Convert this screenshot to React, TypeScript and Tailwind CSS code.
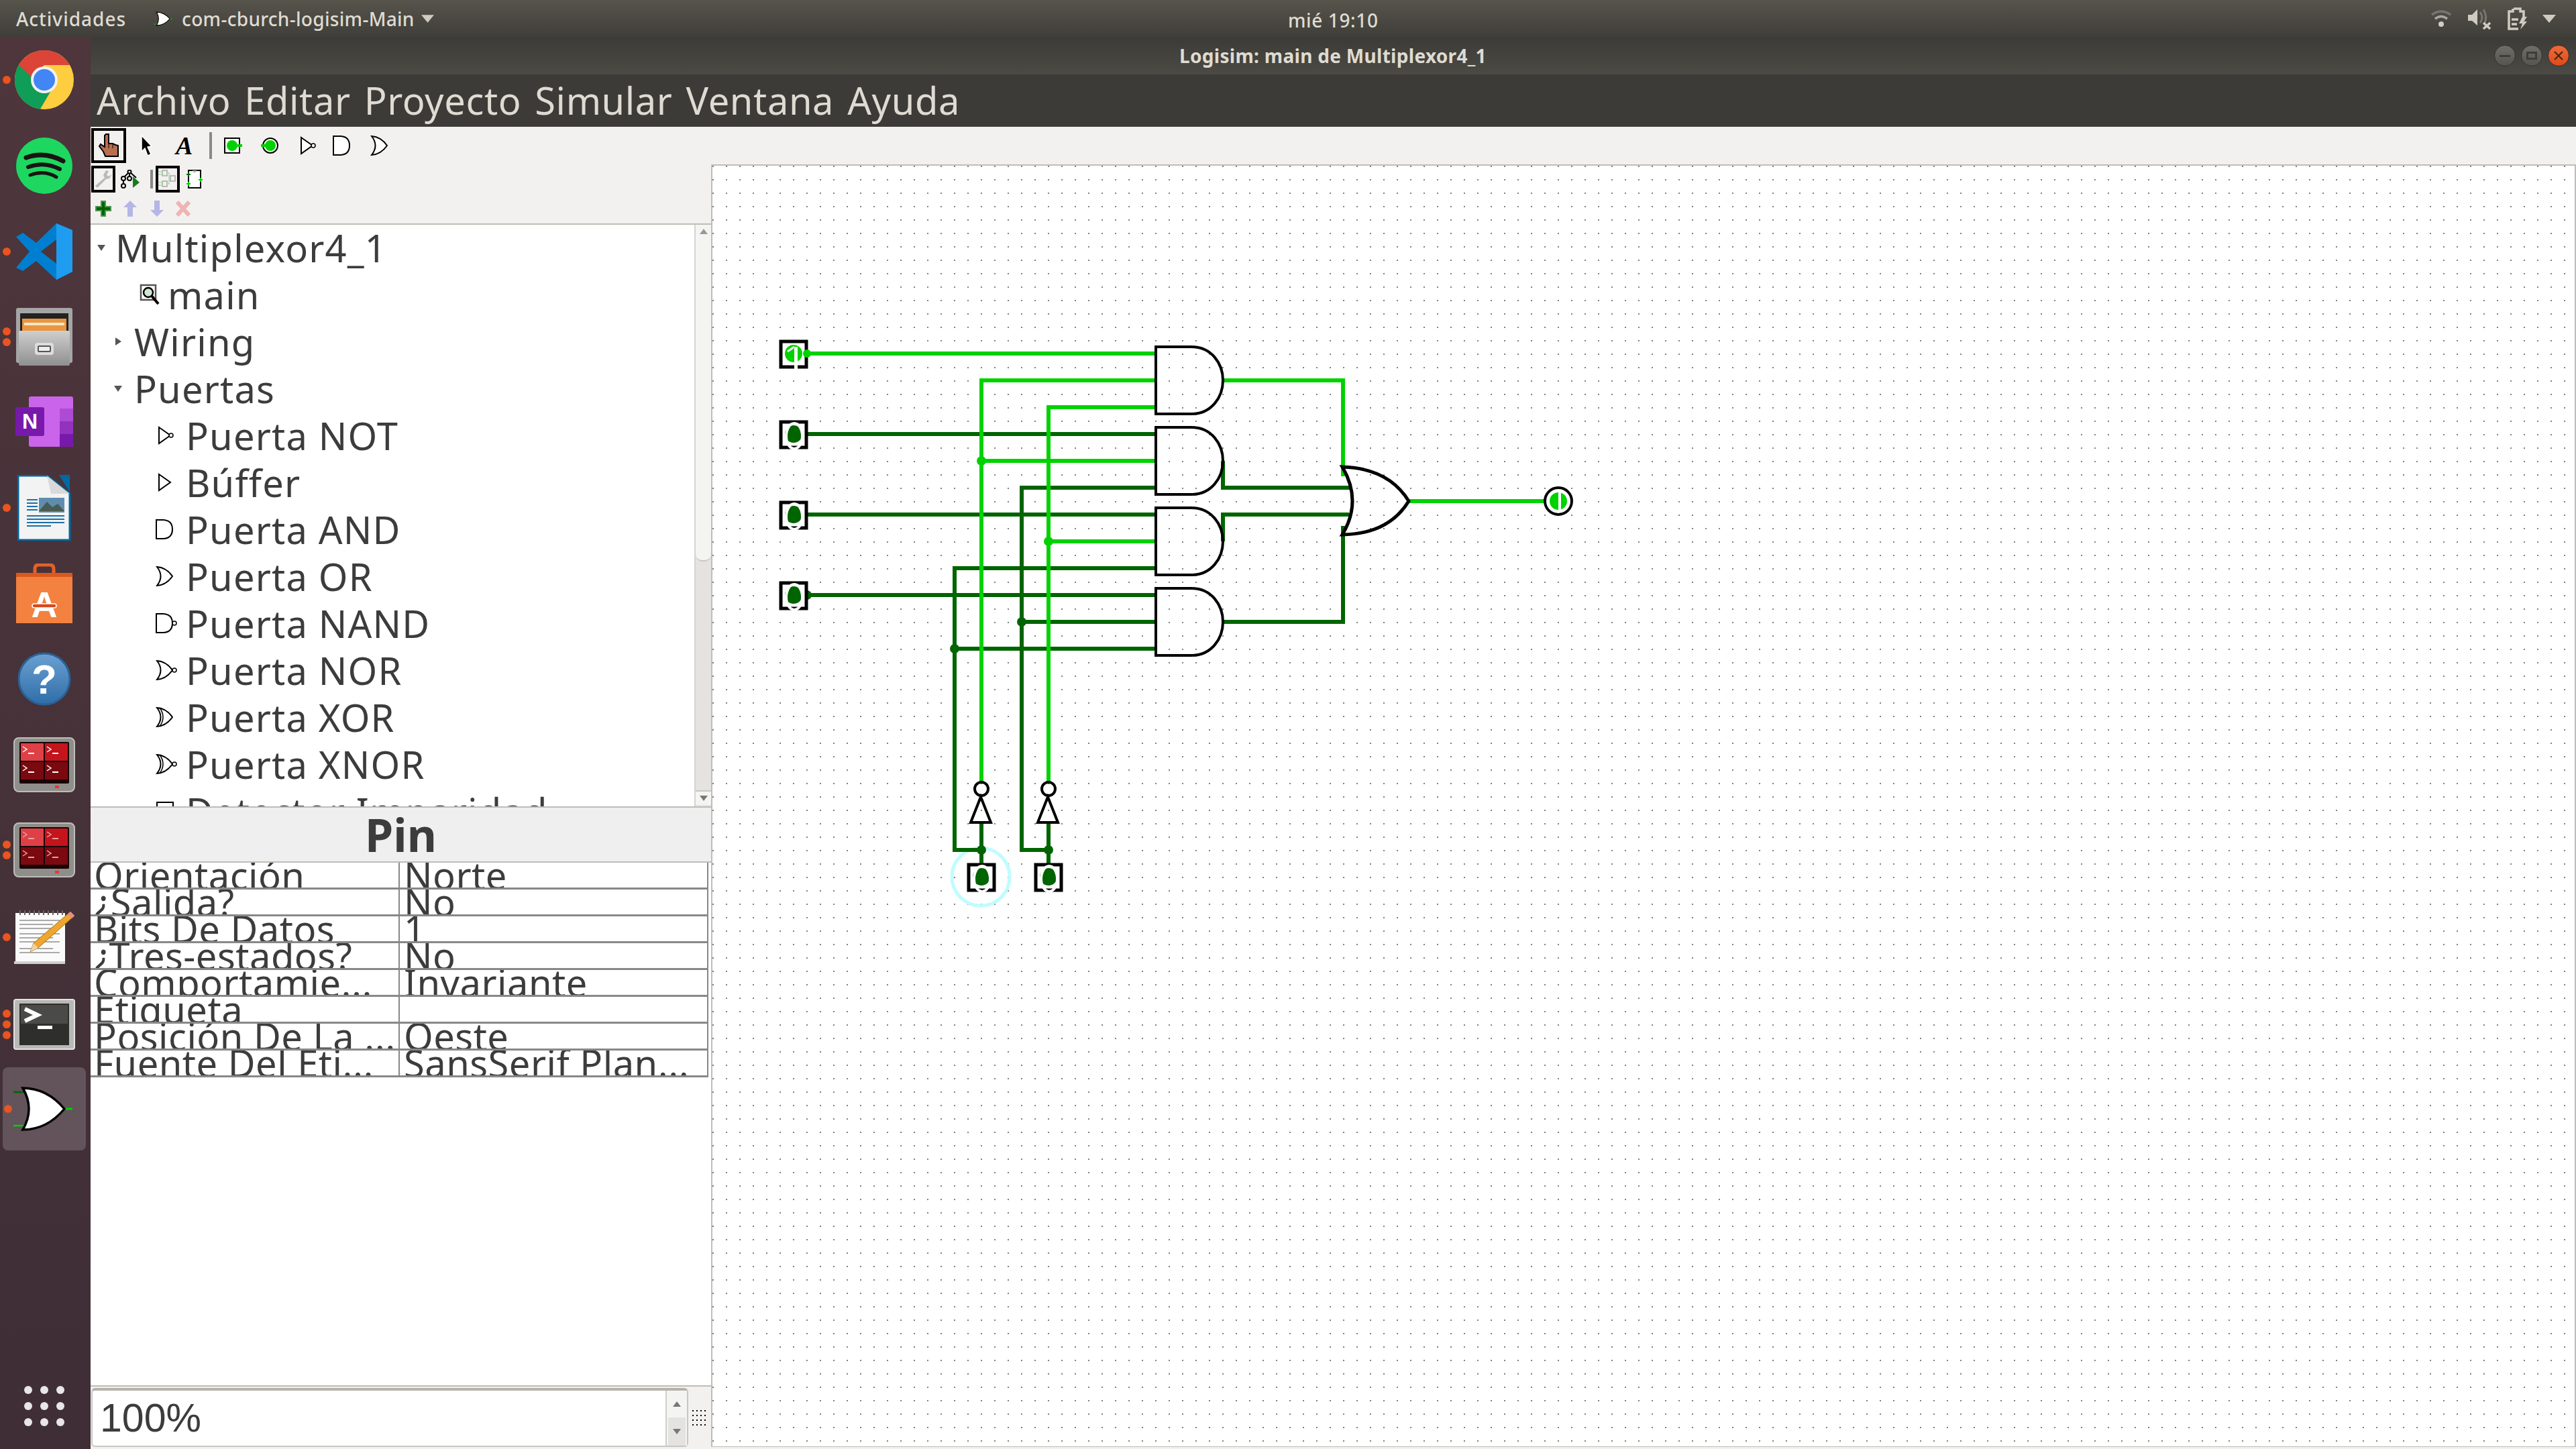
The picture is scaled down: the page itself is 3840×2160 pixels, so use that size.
import React from "react";

const UI_FONT = "font-['Noto_Sans','DejaVu_Sans',sans-serif]";
const BRIGHT = "#00d200";
const DARK = "#006400";

type GateKind = "not" | "buffer" | "and" | "or" | "nand" | "nor" | "xor" | "xnor" | "parity";

// Tree and toolbar gates share one 32x30 box
const GateIcon = ({ kind, className }: { kind: GateKind; className: string }) => {
	const bubble = kind === "not" || kind === "nand" || kind === "nor" || kind === "xnor";
	const bx = kind === "not" ? 23 : 28;
	return (
		<svg viewBox="0 0 32 30" className={className} fill="white" stroke="black" strokeWidth="2">
			{(kind === "not" || kind === "buffer") && <path d="M5 3 L22 15 L5 27 Z" />}
			{(kind === "and" || kind === "nand") && <path d="M1 1 H12 Q25 2 25 15 Q25 28 12 29 H1 Z" />}
			{(kind === "or" || kind === "nor" || kind === "xor" || kind === "xnor") && (
				<path d="M2 1 Q16 2 25 15 Q16 28 2 29 Q13 15 2 1 Z" />
			)}
			{(kind === "xor" || kind === "xnor") && <path d="M6 1 Q16 15 6 29" fill="none" strokeWidth="1.5" />}
			{kind === "parity" && <rect x="2" y="2" width="24" height="26" />}
			{bubble && <circle cx={bx} cy="15" r="3" strokeWidth="1.5" />}
		</svg>
	);
};

const TreeArrow = ({ open, className }: { open?: boolean; className: string }) => (
	<svg viewBox="0 0 14 14" className={className} fill="#555">
		{open ? <path d="M1 3 H13 L7 12 Z" /> : <path d="M3 1 L12 7 L3 13 Z" />}
	</svg>
);

/* ---------- dock ---------- */

const Chrome = () => (
	<svg viewBox="0 0 88 88" className="w-[88px] h-[88px]">
		<circle cx="44" cy="44" r="44" fill="#ffcd40" />
		<path d="M5.9 22 A44 44 0 0 0 38 87.6 L60 50 L44 44 Z" fill="#0f9d58" />
		<path d="M5.9 22 A44 44 0 0 1 82.1 22 H44 L25 40 Z" fill="#db4437" />
		<circle cx="44" cy="44" r="20" fill="#f1f1f1" />
		<circle cx="44" cy="44" r="16" fill="#4285f4" />
	</svg>
);

const Spotify = () => (
	<svg viewBox="0 0 84 84" className="w-[84px] h-[84px]">
		<circle cx="42" cy="42" r="42" fill="#1ed760" />
		<g fill="none" stroke="#191414" strokeLinecap="round">
			<path d="M15 30 Q42 20 70 35" strokeWidth="7" />
			<path d="M18 44 Q42 35 65 47" strokeWidth="6" />
			<path d="M21 56 Q42 48 60 59" strokeWidth="5" />
		</g>
	</svg>
);

const VsCode = () => (
	<svg viewBox="0 0 84 84" className="w-[84px] h-[84px]">
		<path d="M60 0 L84 10 V72 L60 84 L30 56 L10 71 L0 66 L20 42 L0 20 L10 14 L30 29 Z" fill="#007fd0" />
		<path d="M60 24 L37 42 L60 60 Z" fill="#4b343b" />
		<path d="M60 0 L84 10 V72 L60 84 Z" fill="#1f9cf0" />
	</svg>
);

const Files = () => (
	<svg viewBox="0 0 84 86" className="w-[84px] h-[86px]">
		<defs>
			<linearGradient id="cab" x1="0" y1="0" x2="0" y2="1">
				<stop offset="0" stopColor="#cfcfcf" />
				<stop offset="1" stopColor="#8f8f8f" />
			</linearGradient>
		</defs>
		<rect x="0" y="0" width="84" height="82" rx="3" fill="#a5a5a5" />
		<rect x="6" y="8" width="72" height="30" fill="#222" />
		<rect x="9" y="16" width="66" height="18" fill="#e9963f" />
		<rect x="12" y="22" width="60" height="4" fill="#f6e4c8" />
		<rect x="4" y="34" width="76" height="52" rx="2" fill="url(#cab)" />
		<rect x="28" y="52" width="28" height="18" rx="4" fill="#ddd" />
		<rect x="32" y="56" width="20" height="10" rx="2" fill="#555" />
		<rect x="34" y="58" width="16" height="6" fill="#eee" />
	</svg>
);

const OneNote = () => (
	<svg viewBox="0 0 86 76" className="w-[86px] h-[76px]">
		<rect x="20" y="0" width="66" height="75" rx="3" fill="#ca64ea" />
		<rect x="66" y="18" width="20" height="19" fill="#ae4bd5" />
		<rect x="66" y="37" width="20" height="19" fill="#9332bf" />
		<path d="M66 56 H86 V72 Q86 75 83 75 H66 Z" fill="#7719aa" />
		<rect x="0" y="16" width="43" height="43" rx="3" fill="#7719aa" />
		<text x="21.5" y="48" textAnchor="middle" fontFamily="Liberation Sans" fontWeight="700" fontSize="32" fill="white">
			N
		</text>
	</svg>
);

const Writer = () => (
	<svg viewBox="0 0 80 98" className="w-[80px] h-[98px]">
		<path d="M62 0 H78 V26 Z" fill="#0369a3" />
		<path d="M1 1 H44 L78 28 V97 H1 Z" fill="#f3f3f3" stroke="#0369a3" strokeWidth="3" />
		<path d="M44 1 L78 28 H50 Z" fill="#d9d9d9" />
		<rect x="32" y="34" width="38" height="22" fill="#5f8db0" />
		<path d="M32 54 L44 40 L52 48 L60 43 L70 54 Z" fill="#4a5b52" />
		{[36, 41, 46, 51].map((y) => (
			<rect key={y} x="14" y={y} width="16" height="2" fill="#1c6fa8" />
		))}
		{[60, 65, 70, 75].map((y) => (
			<rect key={y} x="14" y={y} width={y === 75 ? 36 : 56} height="2" fill="#1c6fa8" />
		))}
	</svg>
);

const Software = () => (
	<svg viewBox="0 0 84 90" className="w-[84px] h-[90px]">
		<path d="M28 20 V8 Q28 2 34 2 H50 Q56 2 56 8 V20" fill="none" stroke="#e3612a" strokeWidth="5" />
		<path d="M0 14 H84 V89 H0 Z" fill="#f3813f" />
		<rect x="0" y="14" width="84" height="6" fill="#d9591f" />
		<text x="42" y="80" textAnchor="middle" fontFamily="Liberation Sans" fontWeight="700" fontSize="54" fill="white">
			A
		</text>
		<rect x="24" y="60" width="36" height="6" rx="3" fill="#d9491a" stroke="white" strokeWidth="1.5" />
	</svg>
);

const Help = () => (
	<svg viewBox="0 0 80 80" className="w-[80px] h-[80px]">
		<defs>
			<linearGradient id="hlp" x1="0" y1="0" x2="0" y2="1">
				<stop offset="0" stopColor="#6ba0d2" />
				<stop offset="1" stopColor="#2f6ea8" />
			</linearGradient>
		</defs>
		<circle cx="40" cy="40" r="38" fill="url(#hlp)" stroke="#2a6296" strokeWidth="3" />
		<text x="40" y="62" textAnchor="middle" fontFamily="Liberation Sans" fontWeight="700" fontSize="62" fill="white">
			?
		</text>
	</svg>
);

const RedTerminal = ({ dim }: { dim?: boolean }) => (
	<svg viewBox="0 0 92 82" className="w-[92px] h-[82px]">
		<rect x="1" y="1" width="90" height="80" rx="7" fill="#8e8e8a" stroke="#bdbdb9" strokeWidth="2" />
		<rect x="9" y="7" width="74" height="62" rx="2" fill="#1a0305" />
		{[11, 47].map((x) =>
			[9, 37].map((y) => (
				<g key={`${x}-${y}`}>
					<rect x={x} y={y} width="34" height="26" fill={y === 9 ? (x === 11 ? "#de4046" : "#c4141c") : "#7a0a10"} />
					<path d={`M${x + 3} ${y + 5} L${x + 9} ${y + 9} L${x + 3} ${y + 13}`} fill="none" stroke={dim ? "#e9a0a0" : "white"} strokeWidth="1.5" />
					<rect x={x + 11} y={y + 14} width="9" height="2" fill={dim ? "#e9a0a0" : "white"} />
				</g>
			)),
		)}
		<rect x="62" y="72" width="6" height="4" fill="#e33" />
	</svg>
);

const Notes = () => (
	<svg viewBox="0 0 90 80" className="w-[90px] h-[80px]">
		<rect x="2" y="4" width="74" height="72" fill="#fafafa" />
		<path d="M0 76 H76 V80 H0 Z" fill="#cfcfcf" />
		{Array.from({ length: 10 }, (_, i) => (
			<rect key={i} x={8 + i * 7} y="0" width="2" height="7" fill="#666" />
		))}
		{[14, 20, 26, 34, 40, 46, 56, 62].map((y) => (
			<rect key={y} x="8" y={y} width={y % 4 === 0 ? 50 : 60} height="2" fill="#aaa" />
		))}
		<path d="M84 2 L90 8 L36 56 L24 62 L29 49 Z" fill="#eea62d" stroke="#a9701a" strokeWidth="1" />
		<path d="M84 2 L90 8 L86 12 L80 6 Z" fill="#e38d8d" />
		<path d="M24 62 L29 49 L36 56 Z" fill="#eed2a8" />
	</svg>
);

const Terminal = () => (
	<svg viewBox="0 0 92 76" className="w-[92px] h-[76px]">
		<rect x="1" y="1" width="90" height="74" rx="3" fill="#b8b8b6" stroke="#e3e3e1" strokeWidth="2" />
		<rect x="9" y="7" width="74" height="62" fill="#2e2e2c" />
		<rect x="11" y="9" width="70" height="28" fill="#4a4a48" />
		<path d="M17 18 L36 27 L17 36" transform="translate(0 -3)" fill="none" stroke="white" strokeWidth="6" />
		<rect x="36" y="40" width="22" height="5" fill="white" />
	</svg>
);

const LogisimIcon = ({ className }: { className: string }) => (
	<svg viewBox="0 0 88 66" className={className}>
		<path d="M0 8 H20" stroke={DARK} strokeWidth="2.5" />
		<path d="M0 58 H20" stroke={BRIGHT} strokeWidth="2.5" />
		<path d="M76 33 H88" stroke={BRIGHT} strokeWidth="3" />
		<path d="M14 2 Q50 2 76 33 Q50 64 14 64 Q32 33 14 2 Z" fill="white" stroke="black" strokeWidth="3.5" />
	</svg>
);

const Dots = ({ count }: { count: number }) => (
	<div className="w-[20px] flex flex-col items-center gap-[4px]">
		{Array.from({ length: count }, (_, i) => (
			<div key={i} className="w-[12px] h-[12px] rounded-full bg-[#e95420]" />
		))}
	</div>
);

// nudge: the launcher spacing in the screenshot is not quite even
const DOCK_ITEMS: { icon: React.ReactNode; dots: number; nudge: string }[] = [
	{ icon: <Chrome />, dots: 1, nudge: "h-[128px]" },
	{ icon: <Spotify />, dots: 0, nudge: "h-[128px]" },
	{ icon: <VsCode />, dots: 1, nudge: "h-[128px]" },
	{ icon: <Files />, dots: 2, nudge: "h-[126px]" },
	{ icon: <OneNote />, dots: 0, nudge: "h-[128px]" },
	{ icon: <Writer />, dots: 1, nudge: "h-[128px]" },
	{ icon: <Software />, dots: 0, nudge: "h-[127px]" },
	{ icon: <Help />, dots: 0, nudge: "h-[128px]" },
	{ icon: <RedTerminal />, dots: 0, nudge: "h-[127px]" },
	{ icon: <RedTerminal dim />, dots: 2, nudge: "h-[128px]" },
	{ icon: <Notes />, dots: 1, nudge: "h-[131px]" },
	{ icon: <Terminal />, dots: 3, nudge: "h-[129px]" },
];

const Dock = () => (
	<div className="w-[135px] shrink-0 flex flex-col bg-gradient-to-b from-[#4e363c] to-[#3f2e36]">
		{DOCK_ITEMS.map((item, idx) => (
			<div key={idx} className={`${item.nudge} flex items-center relative`}>
				<div className="w-[20px] flex">{item.dots > 0 && <Dots count={item.dots} />}</div>
				<div className="w-[92px] flex justify-center">{item.icon}</div>
			</div>
		))}
		<div className="h-[124px] w-[124px] ml-[4px] rounded-[8px] bg-[#63535a] flex items-center">
			<div className="w-[16px] flex">
				<Dots count={1} />
			</div>
			<LogisimIcon className="w-[88px] h-[66px]" />
		</div>
		<div className="mt-auto mb-[34px] ml-[36px] grid grid-cols-3 gap-[12px] w-[60px]">
			{Array.from({ length: 9 }, (_, i) => (
				<div key={i} className="w-[12px] h-[12px] rounded-full bg-[#e8e6e6]" />
			))}
		</div>
	</div>
);

/* ---------- top panel ---------- */

const TopBar = () => (
	<div className={`h-[55px] shrink-0 flex items-center bg-gradient-to-b from-[#57544c] to-[#3f3e39] text-[#dfdbd2] text-[28px] font-medium relative ${UI_FONT}`}>
		<span className="ml-[24px] tracking-[1px]">Actividades</span>
		<LogisimIcon className="ml-[41px] w-[28px] h-[24px]" />
		<span className="ml-[14px] tracking-[0.3px]">com-cburch-logisim-Main</span>
		<svg viewBox="0 0 20 12" className="ml-[10px] w-[19px] h-[12px]" fill="#cfcbc2">
			<path d="M0 0 H20 L10 12 Z" />
		</svg>
		<span className="absolute left-[1920px] top-[9px] tracking-[0.6px]">mié 19:10</span>
		<div className="ml-auto flex items-center mr-[30px]">
			<svg viewBox="0 0 30 28" className="w-[30px] h-[28px]" fill="none" stroke="#aaa8a2" strokeWidth="3.5">
				<path d="M1 8 Q15 -2 29 8" stroke="#777570" />
				<path d="M6 14 Q15 7 24 14" />
				<circle cx="15" cy="22" r="4" fill="#d0cdc6" stroke="none" />
			</svg>
			<svg viewBox="0 0 34 32" className="ml-[25px] w-[34px] h-[32px]">
				<path d="M0 10 H6 L14 2 V26 L6 19 H0 Z" fill="#cfcbc2" />
				<path d="M18 6 Q24 14 18 22 M23 2 Q30 14 24 24" fill="none" stroke="#777570" strokeWidth="3" />
				<path d="M23 22 L33 31 M33 22 L23 31" stroke="#cfcbc2" strokeWidth="3.5" />
			</svg>
			<svg viewBox="0 0 30 34" className="ml-[25px] w-[30px] h-[34px]">
				<path d="M9 2 H19 V6 H24 V20 M16 32 H2 V6 H8 V2" fill="none" stroke="#cfcbc2" strokeWidth="3.5" />
				<path d="M6 18 H16 M6 25 H14" stroke="#cfcbc2" strokeWidth="3.5" />
				<path d="M22 14 H29 L24 21 H29 L19 33 L22 24 H17 Z" fill="#cfcbc2" />
			</svg>
			<svg viewBox="0 0 20 12" className="ml-[22px] w-[20px] h-[12px]" fill="#cfcbc2">
				<path d="M0 0 H20 L10 12 Z" />
			</svg>
		</div>
	</div>
);

const WindowButton = ({ children, close }: { children: React.ReactNode; close?: boolean }) => (
	<div
		className={`w-[32px] h-[32px] rounded-full border border-[#33322e] flex items-center justify-center bg-gradient-to-b ${
			close ? "from-[#f0693a] to-[#df4a16]" : "from-[#6f6e69] to-[#55544f]"
		}`}
	>
		{children}
	</div>
);

const TitleBar = () => (
	<div className={`h-[56px] shrink-0 flex items-center bg-gradient-to-b from-[#3c3b37] to-[#4b4a44] relative ${UI_FONT}`}>
		<span className="absolute left-[1623px] top-[7px] text-[28px] font-bold text-[#dfdbd2] tracking-[0.3px]">
			Logisim: main de Multiplexor4_1
		</span>
		<div className="ml-auto mr-[10px] flex gap-[8px]">
			<WindowButton>
				<div className="w-[16px] h-[3px] bg-[#3e3d39]" />
			</WindowButton>
			<WindowButton>
				<div className="w-[16px] h-[12px] border-[3px] border-[#3e3d39]" />
			</WindowButton>
			<WindowButton close>
				<svg viewBox="0 0 14 14" className="w-[14px] h-[14px]" stroke="#3a2a10" strokeWidth="2">
					<path d="M1 1 L13 13 M13 1 L1 13" />
				</svg>
			</WindowButton>
		</div>
	</div>
);

const MENU = ["Archivo", "Editar", "Proyecto", "Simular", "Ventana", "Ayuda"];

const MenuBar = () => (
	<div className={`h-[78px] shrink-0 bg-[#3c3b37] flex items-center pl-[9px] pb-[3px] gap-[20px] text-[56px] text-[#dfdbd2] tracking-[0.6px] leading-none ${UI_FONT}`}>
		{MENU.map((m) => (
			<span key={m}>{m}</span>
		))}
	</div>
);

/* ---------- toolbar ---------- */

const Selected = ({ className, children }: { className: string; children: React.ReactNode }) => (
	<div className={`border-[4px] border-black flex items-center justify-center ${className}`}>{children}</div>
);

const Separator = ({ className }: { className: string }) => <div className={`w-[4px] bg-[#888] ${className}`} />;

const Hand = () => (
	<svg viewBox="0 0 32 36" className="w-[32px] h-[36px]">
		<path d="M12 1 H16 V15 L22 15 L26 17 L30 18 V34 H11 L8 27 L2 19 L4 16 L10 20 V3 Z" fill="#b86f50" stroke="black" strokeWidth="2" />
		<path d="M16 15 V22 M22 16 V22" stroke="#4a2a1a" strokeWidth="1.5" />
	</svg>
);

const ToolPin = ({ output }: { output?: boolean }) => (
	<svg viewBox="0 0 28 24" className="w-[28px] h-[24px]">
		{output ? <circle cx="15" cy="12" r="11" fill="white" stroke="black" strokeWidth="2" /> : <rect x="1" y="1" width="22" height="22" fill="white" stroke="black" strokeWidth="2" />}
		<circle cx={output ? 15 : 12} cy="12" r="8" fill={BRIGHT} />
		<rect x={output ? 1 : 20} y="10" width="7" height="4" fill={BRIGHT} />
	</svg>
);

const Toolbar = () => (
	<div className="h-[144px] shrink-0 bg-[#f2f1ef] flex flex-col pl-[1px] pt-[2px]">
		<div className="h-[52px] flex items-center">
			<Selected className="w-[52px] h-[52px]">
				<Hand />
			</Selected>
			<svg viewBox="0 0 20 32" className="ml-[20px] w-[20px] h-[32px]">
				<path d="M3 1 L18 17 L12 18 L17 29 L12 31 L8 20 L3 25 Z" fill="black" stroke="white" strokeWidth="1.5" />
			</svg>
			<span className="ml-[34px] w-[28px] text-[38px] leading-none font-bold italic font-['Liberation_Serif',serif] text-black">A</span>
			<Separator className="ml-[22px] h-[40px]" />
			<div className="ml-[18px] flex">
				<ToolPin />
			</div>
			<div className="ml-[26px] flex">
				<ToolPin output />
			</div>
			<GateIcon kind="not" className="ml-[28px] w-[32px] h-[30px]" />
			<GateIcon kind="and" className="ml-[20px] w-[32px] h-[30px]" />
			<GateIcon kind="or" className="ml-[24px] w-[32px] h-[30px]" />
		</div>
		<div className="h-[40px] mt-[4px] flex items-center">
			<Selected className="w-[36px] h-[40px]">
				<svg viewBox="0 0 28 28" className="w-[28px] h-[28px]">
					<path d="M18 1 L14 8 L16 12 L2 24 L5 27 L18 14 L23 13 L27 7 L22 10 L19 8 L22 2 Z" fill="#b9b9b5" />
				</svg>
			</Selected>
			<svg viewBox="0 0 28 28" className="ml-[8px] w-[28px] h-[28px]" fill="white" stroke="black" strokeWidth="2">
				<path d="M13 3 L4 12 M13 3 L13 12 M13 3 L23 12 M4 12 V24" fill="none" />
				<circle cx="13" cy="3" r="2.5" />
				<circle cx="4" cy="13" r="3" />
				<circle cx="13" cy="13" r="3" />
				<circle cx="4" cy="24" r="3" />
				<path d="M18 10 L28 19 L18 27 Z" fill="#1b7a1b" stroke="none" />
			</svg>
			<Separator className="ml-[16px] h-[28px]" />
			<Selected className="ml-[4px] w-[36px] h-[40px]">
				<svg viewBox="0 0 28 30" className="w-[28px] h-[30px]" fill="none" stroke="#a8a8a4" strokeWidth="1.5">
					<rect x="6" y="2" width="7" height="8" />
					<rect x="6" y="18" width="7" height="8" />
					<rect x="18" y="10" width="7" height="8" />
					<path d="M0 4 H6 M0 8 H6 M0 20 H6 M0 24 H6 M13 6 H16 V14 H18 M13 22 H16 V14" stroke="#a9dca9" />
				</svg>
			</Selected>
			<svg viewBox="0 0 24 28" className="ml-[10px] w-[24px] h-[28px]">
				<rect x="3" y="1" width="18" height="26" fill="white" stroke="black" strokeWidth="2" />
				<path d="M9 1 Q12 7 15 1" fill="#aaa" stroke="#aaa" />
				<path d="M0 7 H6 M3 4 V10" stroke={DARK} strokeWidth="2" />
				<path d="M0 21 H6 M3 18 V24" stroke={BRIGHT} strokeWidth="2" />
				<path d="M18 15 H24 M21 12 V18" stroke={BRIGHT} strokeWidth="2" />
			</svg>
		</div>
		<div className="h-[24px] mt-[12px] flex items-center pl-[6px]">
			<svg viewBox="0 0 24 24" className="w-[24px] h-[24px]">
				<path d="M8 0 H16 V8 H24 V16 H16 V24 H8 V16 H0 V8 H8 Z" fill="#4f944f" />
				<path d="M10 2 H14 V10 H22 V14 H14 V22 H10 V14 H2 V10 H10 Z" fill="#006400" />
			</svg>
			<svg viewBox="0 0 20 24" className="ml-[18px] w-[20px] h-[24px]" fill="#b4b6e6">
				<path d="M10 0 L20 10 H14 V24 H6 V10 H0 Z" />
			</svg>
			<svg viewBox="0 0 20 24" className="ml-[20px] w-[20px] h-[24px]" fill="#b4b6e6">
				<path d="M6 0 H14 V14 H20 L10 24 L0 14 H6 Z" />
			</svg>
			<svg viewBox="0 0 22 24" className="ml-[18px] w-[22px] h-[24px]" stroke="#efb3b3" strokeWidth="6">
				<path d="M2 2 L20 22 M20 2 L2 22" />
			</svg>
		</div>
	</div>
);

/* ---------- explorer ---------- */

const GATES: { label: string; kind: GateKind }[] = [
	{ label: "Puerta NOT", kind: "not" },
	{ label: "Búffer", kind: "buffer" },
	{ label: "Puerta AND", kind: "and" },
	{ label: "Puerta OR", kind: "or" },
	{ label: "Puerta NAND", kind: "nand" },
	{ label: "Puerta NOR", kind: "nor" },
	{ label: "Puerta XOR", kind: "xor" },
	{ label: "Puerta XNOR", kind: "xnor" },
	{ label: "Detector Imparidad", kind: "parity" },
];

const Explorer = () => (
	<div className={`h-[869px] shrink-0 flex border-t-[2px] border-[#c0bdb8] bg-white overflow-hidden text-[56px] leading-[70px] tracking-[1.2px] text-[#3c3c3c] ${UI_FONT}`}>
		<div className="flex-1 overflow-hidden">
			<div className="h-[70px] flex items-center pl-[9px] pb-[3px]">
				<TreeArrow open className="w-[14px] h-[14px]" />
				<span className="ml-[14px]">Multiplexor4_1</span>
			</div>
			<div className="h-[70px] flex items-center pl-[73px] pb-[3px]">
				<svg viewBox="0 0 30 32" className="w-[30px] h-[32px]" fill="none" stroke="black" strokeWidth="2.5">
					<rect x="2" y="2" width="22" height="22" stroke="#555" />
					<circle cx="13" cy="13" r="7" fill="#cfe7cf" />
					<path d="M18 18 L28 30" strokeWidth="4" />
				</svg>
				<span className="ml-[12px]">main</span>
			</div>
			<div className="h-[70px] flex items-center pl-[34px] pb-[3px]">
				<TreeArrow className="w-[14px] h-[14px]" />
				<span className="ml-[17px]">Wiring</span>
			</div>
			<div className="h-[70px] flex items-center pl-[34px] pb-[3px]">
				<TreeArrow open className="w-[14px] h-[14px]" />
				<span className="ml-[17px]">Puertas</span>
			</div>
			{GATES.map((g) => (
				<div key={g.label} className="h-[70px] flex items-center pl-[97px] pb-[3px]">
					<GateIcon kind={g.kind} className="w-[32px] h-[30px]" />
					<span className="ml-[13px]">{g.label}</span>
				</div>
			))}
		</div>
		<div className="w-[25px] shrink-0 flex flex-col bg-[#e4e3e1] border-l-[2px] border-[#d6d4d1]">
			<div className="h-[502px] bg-[#f4f4f3] rounded-b-[10px] border-b-[2px] border-[#c8c6c3] flex justify-center pt-[6px]">
				<svg viewBox="0 0 12 8" className="w-[12px] h-[8px]" fill="#999">
					<path d="M0 8 H12 L6 0 Z" />
				</svg>
			</div>
			<div className="flex-1" />
			<div className="h-[22px] bg-[#f4f4f3] mb-[2px] flex justify-center items-center border-t-[2px] border-[#c8c6c3]">
				<svg viewBox="0 0 12 8" className="w-[12px] h-[8px]" fill="#777">
					<path d="M0 0 H12 L6 8 Z" />
				</svg>
			</div>
		</div>
	</div>
);

/* ---------- attribute table ---------- */

const ATTRS: [string, string][] = [
	["Orientación", "Norte"],
	["¿Salida?", "No"],
	["Bits De Datos", "1"],
	["¿Tres-estados?", "No"],
	["Comportamie...", "Invariante"],
	["Etiqueta", ""],
	["Posición De La ...", "Oeste"],
	["Fuente Del Eti...", "SansSerif Plan..."],
];

const Attributes = () => (
	<div className={`flex-1 flex flex-col bg-white text-[#3c3c3c] ${UI_FONT}`}>
		<div className="h-[84px] shrink-0 bg-[#efefef] border-t-[2px] border-b-[2px] border-[#c0bdb8] flex items-center justify-center text-[68px] font-bold leading-none">
			Pin
		</div>
		<div className="mr-[4px]">
			{ATTRS.map(([name, value]) => (
				<div key={name} className="h-[40px] flex border-b-[3px] border-[#888] text-[56px] leading-[37px] tracking-[0.5px] overflow-hidden">
					<div className="w-[461px] pl-[5px] border-r-[2px] border-[#888] overflow-hidden whitespace-nowrap">{name}</div>
					<div className="flex-1 pl-[6px] border-r-[2px] border-[#888] overflow-hidden whitespace-nowrap">{value}</div>
				</div>
			))}
		</div>
		<div className="flex-1" />
		<div className="h-[95px] shrink-0 border-t-[2px] border-[#c0bdb8] bg-[#f2f1ef] flex items-start pt-[2px] pl-[1px]">
			<div className="w-[890px] h-[88px] border-[2px] border-[#c8c6c2] border-t-[4px] border-t-[#b5b2ac] rounded-[6px] bg-white flex">
				<div className="flex-1 pl-[11px] flex items-center text-[59px] font-['Liberation_Sans',sans-serif] leading-none">100%</div>
				<div className="w-[32px] border-l-[2px] border-[#d0cec9] flex flex-col bg-[#f4f4f3]">
					<div className="h-[40px] flex items-center justify-center">
						<svg viewBox="0 0 12 8" className="w-[12px] h-[8px]" fill="#777">
							<path d="M0 8 H12 L6 0 Z" />
						</svg>
					</div>
					<div className="flex-1 mx-[2px] bg-[#e4e3e1] flex items-center justify-center">
						<svg viewBox="0 0 12 8" className="w-[12px] h-[8px]" fill="#777">
							<path d="M0 0 H12 L6 8 Z" />
						</svg>
					</div>
				</div>
			</div>
			<div className="ml-[6px] mt-[33px] grid grid-cols-4 gap-x-[4px] gap-y-[5px]">
				{Array.from({ length: 16 }, (_, i) => (
					<div key={i} className="w-[2px] h-[2px] bg-black" />
				))}
			</div>
		</div>
	</div>
);

/* ---------- canvas ---------- */

const darkWires = [
	"1203,647 1723,647",
	"1203,767 1723,767",
	"1203,887 1723,887",
	"1723,727 1523,727 1523,1267 1563,1267",
	"1723,847 1423,847 1423,1267 1463,1267",
	"1523,927 1723,927",
	"1423,967 1723,967",
	"1463,1226 1463,1290",
	"1563,1226 1563,1290",
	"1823,687 1823,727 2013,727",
	"1823,807 1823,767 2011,767",
	"1823,927 2002,927 2002,784",
];
const brightWires = [
	"1203,527 1723,527",
	"1723,567 1463,567 1463,1168",
	"1723,607 1563,607 1563,1168",
	"1463,687 1723,687",
	"1563,807 1723,807",
	"1823,567 2002,567 2002,710",
	"2100,747 2304,747",
];
const darkDots: [number, number][] = [
	[1523, 927],
	[1423, 967],
	[1203, 887],
	[1463, 1267],
	[1563, 1267],
];
const brightDots: [number, number][] = [
	[1463, 687],
	[1563, 807],
];

const AndGate = ({ cy }: { cy: number }) => (
	<path
		d={`M1776 ${cy - 50} H1723 V${cy + 50} H1776 C1806 ${cy + 50} 1823 ${cy + 25} 1823 ${cy} C1823 ${cy - 25} 1806 ${cy - 50} 1776 ${cy - 50} Z`}
		fill="none"
		stroke="black"
		strokeWidth="4"
	/>
);

const InputPin = ({ cx, cy, on }: { cx: number; cy: number; on?: boolean }) => (
	<g>
		<rect x={cx - 19} y={cy - 18} width="38" height="38" fill="white" stroke="black" strokeWidth="5" />
		<circle cx={cx} cy={cy} r="13" fill={on ? BRIGHT : DARK} />
		{on ? (
			<>
				<rect x={cx + 1} y={cy - 10} width="5" height="34" fill="white" />
				<path d={`M${cx - 9} ${cy - 3} L${cx + 1} ${cy - 10}`} stroke="white" strokeWidth="3" />
			</>
		) : (
			<ellipse cx={cx + 1} cy={cy + 3} rx="12" ry="19" fill="none" stroke="white" strokeWidth="4" />
		)}
	</g>
);

const NotGate = ({ cx }: { cx: number }) => (
	<g fill="none" stroke="black" strokeWidth="4">
		<path d={`M${cx} 1188 L${cx + 15} 1226 H${cx - 15} Z`} />
		<circle cx={cx + 1} cy="1176" r="10" />
	</g>
);

const Circuit = () => (
	<svg viewBox="1062 247 2776 1909" className="w-full h-full block">
		<defs>
			<pattern id="grid" x="2" y="7" width="20" height="20" patternUnits="userSpaceOnUse">
				<rect width="2" height="2" fill="#808080" />
			</pattern>
		</defs>
		<rect x="1062" y="247" width="2776" height="1909" fill="url(#grid)" />
		<circle cx="1462" cy="1307" r="43" fill="none" stroke="#bffcff" strokeWidth="5" />
		<g fill="none" strokeWidth="6">
			{darkWires.map((p) => (
				<polyline key={p} points={p} stroke={DARK} />
			))}
			{brightWires.map((p) => (
				<polyline key={p} points={p} stroke={BRIGHT} />
			))}
		</g>
		{darkDots.map(([x, y]) => (
			<circle key={`${x}-${y}`} cx={x} cy={y} r="7" fill={DARK} />
		))}
		{brightDots.map(([x, y]) => (
			<circle key={`${x}-${y}`} cx={x} cy={y} r="7" fill={BRIGHT} />
		))}
		{[567, 687, 807, 927].map((cy) => (
			<AndGate key={cy} cy={cy} />
		))}
		<path d="M2001 696 Q2070 698 2100 747 Q2070 796 2001 797 Q2031 747 2001 696 Z" fill="none" stroke="black" strokeWidth="5" />
		<NotGate cx={1462} />
		<NotGate cx={1562} />
		<InputPin cx={1183} cy={527} on />
		<InputPin cx={1183} cy={647} />
		<InputPin cx={1183} cy={767} />
		<InputPin cx={1183} cy={887} />
		<InputPin cx={1463} cy={1307} />
		<InputPin cx={1563} cy={1307} />
		<circle cx="1203" cy="527" r="6" fill={BRIGHT} />
		<circle cx="2323" cy="747" r="20" fill="white" stroke="black" strokeWidth="4" />
		<circle cx="2323" cy="747" r="13" fill={BRIGHT} />
		<rect x="2323" y="732" width="4" height="30" fill="white" />
	</svg>
);

export default function App() {
	return (
		<div className="w-[3840px] h-[2160px] flex flex-col overflow-hidden bg-[#f2f1ef]">
			<TopBar />
			<div className="flex-1 flex min-h-0">
				<Dock />
				<div className="flex-1 flex flex-col min-w-0">
					<TitleBar />
					<MenuBar />
					<div className="flex-1 flex min-h-0">
						<div className="w-[925px] shrink-0 flex flex-col">
							<Toolbar />
							<Explorer />
							<Attributes />
						</div>
						<div className="flex-1 flex flex-col min-w-0">
							<div className="h-[56px] shrink-0" />
							<div className="flex-1 min-h-0 mb-[3px] bg-white border-l-[2px] border-t-[2px] border-r-[2px] border-b-[1px] border-[#c0bdb8] overflow-hidden">
								<Circuit />
							</div>
						</div>
					</div>
				</div>
			</div>
		</div>
	);
}
